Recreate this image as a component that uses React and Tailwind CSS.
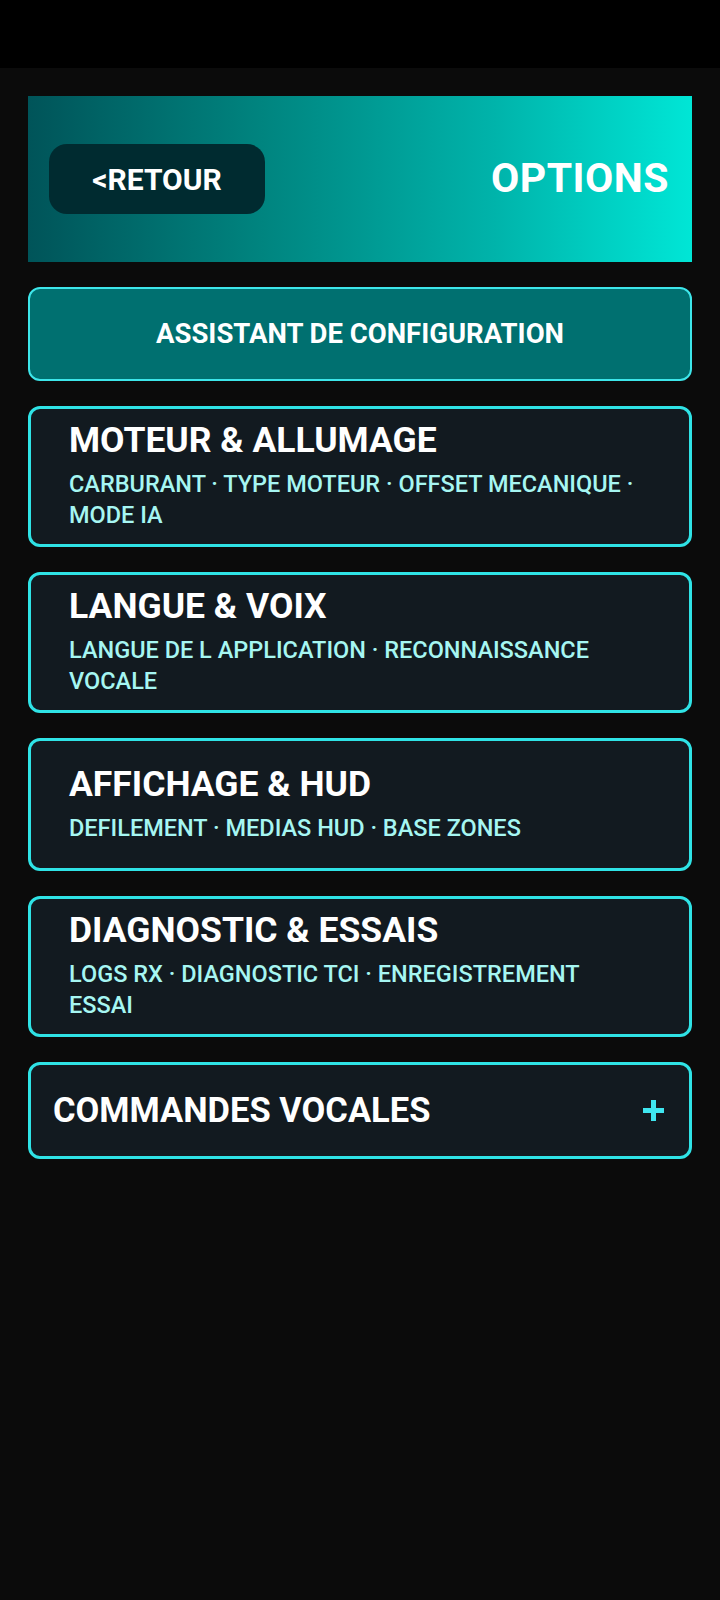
import React from "react";

const font = { fontFamily: "Roboto, 'Noto Sans', sans-serif" };

function Card({ title, sub }) {
  return (
    <div className="min-h-[133px] flex flex-col justify-center rounded-[12px] border-[3px] border-[#2fe3e6] bg-[#121a20] pl-[38px] pr-[44px] pt-[10px] pb-[13px]">
      <div className="text-[35.5px] leading-[42px] font-bold text-white">{title}</div>
      <div className="mt-[8px] text-[23.5px] leading-[31px] font-medium text-[#a6f6f2]">{sub}</div>
    </div>
  );
}

export default function App() {
  return (
    <div className="w-[720px] min-h-[1600px] bg-[#0b0b0b]" style={font}>
      <div className="h-[68px] bg-black" />
      <div className="px-[28px] pt-[28px] flex flex-col gap-[25px]">
        <div className="h-[166px] flex items-center justify-between pl-[21px] pr-[23px] bg-[linear-gradient(90deg,#005459_0%,#00847f_35%,#00b3aa_70%,#00e6d6_100%)]">
          <div className="w-[216px] h-[70px] rounded-[18px] bg-[#002b30] flex items-center justify-center text-white font-bold text-[30px]">
            &lt;RETOUR
          </div>
          <div className="text-white font-bold text-[41px] tracking-[0.5px]">OPTIONS</div>
        </div>

        <div className="h-[94px] rounded-[12px] border-[2px] border-[#3de6ea] bg-[#007070] flex items-center justify-center text-white font-bold text-[27.5px]">
          ASSISTANT DE CONFIGURATION
        </div>

        <Card title="MOTEUR & ALLUMAGE" sub="CARBURANT · TYPE MOTEUR · OFFSET MECANIQUE · MODE IA" />
        <Card title="LANGUE & VOIX" sub="LANGUE DE L APPLICATION · RECONNAISSANCE VOCALE" />
        <Card title="AFFICHAGE & HUD" sub="DEFILEMENT · MEDIAS HUD · BASE ZONES" />
        <Card title="DIAGNOSTIC & ESSAIS" sub="LOGS RX · DIAGNOSTIC TCI · ENREGISTREMENT ESSAI" />

        <div className="h-[97px] rounded-[12px] border-[3px] border-[#2fe3e6] bg-[#121a20] flex items-center justify-between pl-[22px] pr-[25px]">
          <div className="text-white font-bold text-[34.5px]">COMMANDES VOCALES</div>
          <svg width="21" height="21" viewBox="0 0 21 21">
            <rect x="8" y="0" width="5" height="21" fill="#3fe6f0" />
            <rect x="0" y="8" width="21" height="5" fill="#3fe6f0" />
          </svg>
        </div>
      </div>
    </div>
  );
}
